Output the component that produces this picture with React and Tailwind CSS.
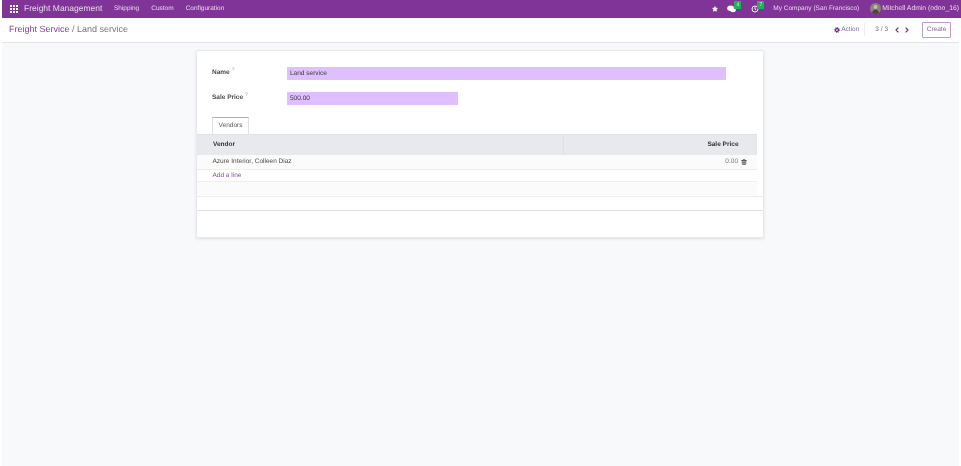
import React from "react";
import { Star, ChevronLeft, ChevronRight, Trash2 } from "lucide-react";

function Grid() {
  return (
    <svg width="8" height="8" viewBox="0 0 8 8" className="fill-white">
      {[0, 3, 6].flatMap((x) => [0, 3, 6].map((y) => <rect key={x + "-" + y} x={x} y={y} width="2" height="2" />))}
    </svg>
  );
}

function Badge({ children, className }) {
  return <span className={"absolute flex items-center justify-center w-[7px] h-[8px] bg-[#20b05c] text-[#e6f7ec] text-[5px] leading-none " + className}>{children}</span>;
}

export default function App() {
  return (
    <div className="h-[466px] w-[961px] overflow-hidden bg-white pl-[2px] font-['Liberation_Sans',Arial,sans-serif] text-[#4c4c4c] opacity-[0.999] will-change-transform [text-rendering:geometricPrecision]">
      <header className="flex h-[17.5px] w-[959px] items-center bg-[#813497] text-[6.5px] text-white">
        <div className="ml-[8px] flex items-center"><Grid /></div>
        <span className="ml-[6px] text-[8.5px] text-[#e6d8ea]">Freight Management</span>
        <nav className="ml-[11.5px] flex gap-[12px] text-[#e6d8ea]">
          <span>Shipping</span>
          <span>Custom</span>
          <span>Configuration</span>
        </nav>
        <div className="ml-auto flex items-center text-[#e6d8ea]">
          <Star size={6} className="fill-white text-white" />
          <span className="relative ml-[9px] h-[8px] w-[9px]">
            <svg width="9" height="8" viewBox="0 0 9 8" className="fill-white"><ellipse cx="3.6" cy="3.2" rx="3.4" ry="2.6" /><ellipse cx="6" cy="5" rx="2.8" ry="2.2" /></svg>
            <Badge className="left-[7px] top-[-3.5px]">4</Badge>
          </span>
          <span className="relative ml-[15px] h-[8px] w-[8px]">
            <svg width="8" height="8" viewBox="0 0 8 8" fill="none" stroke="white" strokeWidth="1"><circle cx="4" cy="4" r="3" /><path d="M4 2.2V4l1.2.8" /></svg>
            <Badge className="left-[6px] top-[-3.5px]">7</Badge>
          </span>
          <span className="ml-[14px]">My Company (San Francisco)</span>
          <span className="ml-[11px] flex h-[11px] w-[11px] items-center justify-center overflow-hidden rounded-full bg-[#8a8377]">
            <svg width="11" height="11" viewBox="0 0 11 11"><circle cx="5.5" cy="4" r="2" fill="#c4bdb1" /><path d="M2 11c0-3 1.5-4.5 3.5-4.5S9 8 9 11z" fill="#4a4641" /></svg>
          </span>
          <span className="ml-[1px] mr-[2px] text-[6.8px]">Mitchell Admin (odoo_16)</span>
        </div>
      </header>

      <div className="flex h-[25.5px] w-[957px] items-center border-b border-[#e4e5e8] bg-white">
        <div className="ml-[7px] flex items-center text-[9px]">
          <span className="text-[#7f3f95]">Freight Service</span>
          <span className="ml-[2.5px] text-[#777777]">/ Land service</span>
        </div>
        <div className="ml-auto flex items-center">
          <svg width="6" height="6" viewBox="0 0 6 6" fill="none" stroke="#71347f">
            <circle cx="3" cy="3" r="1.5" strokeWidth="1.3" />
            <circle cx="3" cy="3" r="2.5" strokeWidth="1" strokeDasharray="1 0.96" />
          </svg>
          <span className="ml-[1.5px] text-[6.5px] text-[#7a6a8a]">Action</span>
          <div className="ml-[5px] h-[13px] w-px bg-[#eeeeee]" />
          <span className="ml-[10px] text-[6.5px] text-[#777777]">3 / 3</span>
          <ChevronLeft size={8} strokeWidth={3.5} className="ml-[5px] text-[#71347f]" />
          <ChevronRight size={8} strokeWidth={3.5} className="ml-[2px] text-[#71347f]" />
          <span className="ml-[11px] mr-[8px] flex h-[16px] w-[29px] items-center justify-center rounded-[1px] border border-[#bb9cc7] text-[6.5px] text-[#7d6a8c]">Create</span>
        </div>
      </div>

      <main className="h-[423px] w-[957px] bg-[#f8f9fb] pl-[194px] pt-[7px]">
        <section className="h-[188px] w-[568px] border border-[#e8e9ec] bg-white shadow-[0_1px_3px_rgba(0,0,0,0.1)]">
          <div className="pl-[15px] pt-[16px]">
            <div className="flex h-[13px] items-center">
              <label className="flex w-[75px] -translate-y-[1px] items-center text-[6.5px] font-bold text-[#4c4c4c]">Name<span className="relative -top-[2px] ml-[2px] text-[5px] font-normal text-[#999999]">?</span></label>
              <div className="flex h-[13px] w-[438.5px] items-center bg-[#dfbfff] pl-[3px] text-[6.5px] text-[#3a3a3a]">Land service</div>
            </div>
            <div className="mt-[12px] flex h-[13px] items-center">
              <label className="flex w-[75px] -translate-y-[1px] items-center text-[6.5px] font-bold text-[#4c4c4c]">Sale Price<span className="relative -top-[2px] ml-[2px] text-[5px] font-normal text-[#999999]">?</span></label>
              <div className="flex h-[13px] w-[171px] items-center bg-[#dfbfff] pl-[3px] text-[6.5px] text-[#3a3a3a]">500.00</div>
            </div>
            <div className="mt-[12px] flex h-[17px] w-[37px] items-center justify-center border border-b-0 border-[#dee2e6] border-t-[#c3a5cf] bg-white text-[6.5px] text-[#555555]">Vendors</div>
          </div>

          <div className="w-[560px] border-t border-[#dee2e6]">
            <div className="flex h-[20px] items-center bg-[#e7e9ed] text-[6.5px] font-bold text-[#333333]">
              <div className="flex h-full w-[367px] items-center border-r border-[#dee0e4] pl-[16px]">Vendor</div>
              <div className="flex flex-1 items-center justify-end pr-[18.5px]">Sale Price</div>
            </div>
            <div className="flex h-[15px] items-center border-b border-[#eeeeee] bg-[#fbfbfb] pl-[15.5px] text-[6.5px] text-[#4c4c4c]">
              <span>Azure Interior, Colleen Diaz</span>
              <span className="ml-auto text-[#777777]">0.00</span>
              <Trash2 size={6} strokeWidth={3} className="ml-[3px] mr-[10px] text-[#444444]" />
            </div>
            <div className="flex h-[12px] items-center border-b border-[#eeeeee] pl-[15.5px] text-[6.5px] text-[#8a4a9f]">Add a line</div>
            <div className="h-[14px] bg-[#fbfbfb]" />
          </div>
          <div className="h-[14px] border-t border-[#eeeeee]" />
          <div className="border-t border-[#e0e0e0]" />
        </section>
      </main>
    </div>
  );
}
